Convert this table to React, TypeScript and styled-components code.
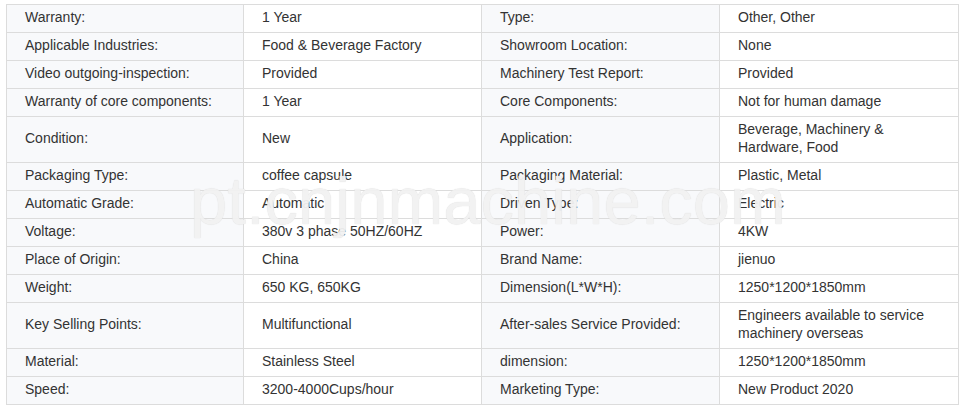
import React from "react";
import styled, { createGlobalStyle } from "styled-components";

const Global = createGlobalStyle`
  html, body { margin: 0; padding: 0; background: #ffffff; }
  body { font-family: "Liberation Sans", Arial, sans-serif; }
`;

const Page = styled.div`
  position: relative;
  padding: 4px 0 0 6px;
  width: 972px;
  height: 416px;
  box-sizing: border-box;
  overflow: hidden;
`;

const Table = styled.table`
  width: 952px;
  border-collapse: collapse;
  table-layout: fixed;
`;

const Col = styled.col<{ $w: number }>`
  width: ${(p) => p.$w}px;
`;

const Cell = styled.td<{ $label?: boolean }>`
  border: 1px solid #dcdcdc;
  background: ${(p) => (p.$label ? "#f8f9fb" : "#ffffff")};
  color: #333333;
  font-size: 14px;
  line-height: 18px;
  padding: 3px 18px 6px 18px;
  height: 18px;
  vertical-align: middle;
  text-align: left;
`;

const Watermark = styled.div`
  position: absolute;
  left: 190px;
  top: 167px;
  font-family: "Liberation Sans", Arial, sans-serif;
  font-size: 67px;
  line-height: 67px;
  color: #f2f2f2;
  text-shadow: 0 0 1px #d6d6d6;
  white-space: nowrap;
  pointer-events: none;
  opacity: 0.95;
`;

const rows: [string, string, string, string][] = [
  ["Warranty:", "1 Year", "Type:", "Other, Other"],
  ["Applicable Industries:", "Food & Beverage Factory", "Showroom Location:", "None"],
  ["Video outgoing-inspection:", "Provided", "Machinery Test Report:", "Provided"],
  ["Warranty of core components:", "1 Year", "Core Components:", "Not for human damage"],
  ["Condition:", "New", "Application:", "Beverage, Machinery & Hardware, Food"],
  ["Packaging Type:", "coffee capsule", "Packaging Material:", "Plastic, Metal"],
  ["Automatic Grade:", "Automatic", "Driven Type:", "Electric"],
  ["Voltage:", "380v 3 phase 50HZ/60HZ", "Power:", "4KW"],
  ["Place of Origin:", "China", "Brand Name:", "jienuo"],
  ["Weight:", "650 KG, 650KG", "Dimension(L*W*H):", "1250*1200*1850mm"],
  ["Key Selling Points:", "Multifunctional", "After-sales Service Provided:", "Engineers available to service machinery overseas"],
  ["Material:", "Stainless Steel", "dimension:", "1250*1200*1850mm"],
  ["Speed:", "3200-4000Cups/hour", "Marketing Type:", "New Product 2020"],
];

export default function App() {
  return (
    <>
      <Global />
      <Page>
        <Table>
          <colgroup>
            <Col $w={237} />
            <Col $w={238} />
            <Col $w={238} />
            <Col $w={239} />
          </colgroup>
          <tbody>
            {rows.map((r, i) => (
              <tr key={i}>
                <Cell $label>{r[0]}</Cell>
                <Cell>{r[1]}</Cell>
                <Cell $label>{r[2]}</Cell>
                <Cell>{r[3]}</Cell>
              </tr>
            ))}
          </tbody>
        </Table>
        <Watermark>pt.cnjnmachine.com</Watermark>
      </Page>
    </>
  );
}
